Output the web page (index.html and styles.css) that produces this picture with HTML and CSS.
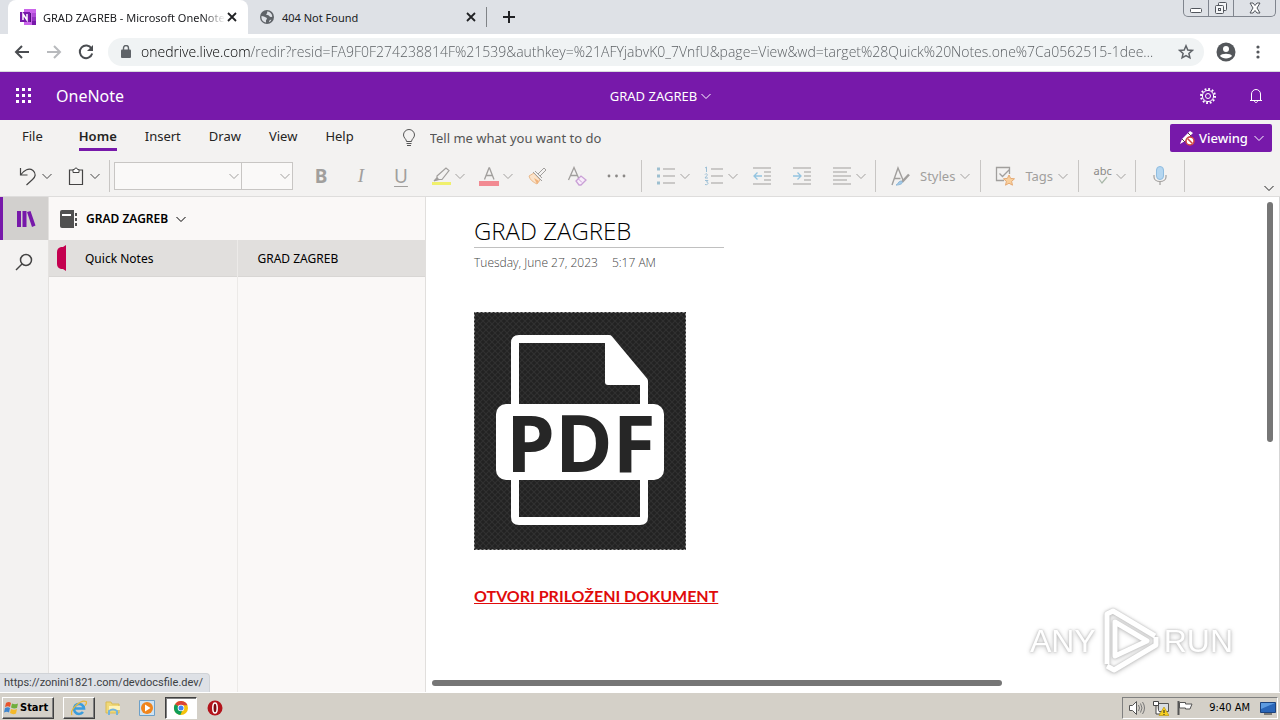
FILE: index.html
```html
<!DOCTYPE html>
<html lang="en">
<head>
<meta charset="utf-8">
<title>GRAD ZAGREB - Microsoft OneNote</title>
<link rel="stylesheet" href="styles.css">
</head>
<body>
<svg class="defs" aria-hidden="true">
  <symbol id="chev" viewBox="0 0 10 10"><path d="M.5 3 5 7.500 9.500 3" fill="none" stroke="currentColor" stroke-width="1"/></symbol>
  <symbol id="cross" viewBox="0 0 10 10"><path d="M1 1 9 9M9 1 1 9" fill="none" stroke="currentColor" stroke-width="1.800"/></symbol>
</svg>

<header class="tabstrip">
  <div class="tab active">
    <svg class="i16" viewBox="0 0 16 16"><path fill="#ca64ea" d="M4 0h12v16H4z"/><path fill="#ae4bd5" d="M12 4h4v4h-4z"/><path fill="#9332bf" d="M12 8h4v4h-4z"/><path fill="#7719aa" d="M12 12h4v4h-4z"/><path fill="#50107a" d="M4 4h7v9H4z"/><path fill="#7719aa" d="M0 3h10v10H0z"/><path d="M3 11V5l4 6V5" fill="none" stroke="#fff" stroke-width="1.500"/></svg>
    <span class="tab-title fade">GRAD ZAGREB - Microsoft OneNote</span>
    <button class="bare" aria-label="Close tab"><svg class="i10"><use href="#cross"/></svg></button>
  </div>
  <div class="tab">
    <svg class="i16" viewBox="0 0 16 16"><circle cx="8" cy="8" r="7" fill="#5f6368"/><path fill="#dee1e6" d="M2.500 7c2 0 3 1 4.500 1.500 1.500.5 1 2 0 2.500v2.500C4 13 2 10.500 2.500 7zM8 2.500c3 0 5 2 5.300 5-1.300.8-2.300.8-3-.5-1-1.300-3-.5-3.300-2 1 0 1.500-.8 1-2.500zM10 13c0-1 .5-2 2.300-2.500C12 12 11 12.800 10 13z"/></svg>
    <span class="tab-title">404 Not Found</span>
    <button class="bare" aria-label="Close tab"><svg class="i10"><use href="#cross"/></svg></button>
  </div>
  <button class="newtab bare" aria-label="New tab"><svg class="i12" viewBox="0 0 12 12"><path d="M6 0v12M0 6h12" stroke="#202124" stroke-width="2"/></svg></button>
  <div class="winbtns">
    <button aria-label="Minimize"><svg width="12" height="16" viewBox="0 0 12 16"><rect x=".5" y="8.500" width="11" height="4" rx="1" fill="#fff" stroke="#52565d"/></svg></button>
    <button aria-label="Restore"><svg width="14" height="16" viewBox="0 0 14 16"><g fill="#f4f5f7" stroke="#52565d"><rect x="4.500" y="2.500" width="8" height="8" rx="1"/><rect x="1.500" y="5.500" width="8" height="8" rx="1"/><rect x="4.500" y="8.500" width="2" height="2"/></g></svg></button>
    <button class="wide" aria-label="Close"><svg width="14" height="16" viewBox="0 0 14 16"><path d="M2 3h3l2 2.500L9 3h3L9 8l3 5H9l-2-2.500L5 13H2l3-5z" fill="#fff" stroke="#52565d"/></svg></button>
  </div>
</header>

<nav class="navbar">
  <button class="bare" aria-label="Back"><svg class="i16" viewBox="0 0 16 16"><path d="M15 8H2M8 2 2 8l6 6" fill="none" stroke="#4a4d51" stroke-width="2"/></svg></button>
  <button class="bare" aria-label="Forward"><svg class="i16" viewBox="0 0 16 16"><path d="M1 8h13M8 2l6 6-6 6" fill="none" stroke="#b8babd" stroke-width="2"/></svg></button>
  <button class="bare" aria-label="Reload"><svg class="i16" viewBox="0 0 16 16"><path d="M13.500 4.500A6.300 6.300 0 1 0 14.200 9.500" fill="none" stroke="#4a4d51" stroke-width="2"/><path d="M15 1v6H9z" fill="#4a4d51"/></svg></button>
  <div class="omnibox">
    <svg width="10" height="13" viewBox="0 0 10 13"><rect y="4.500" width="10" height="8.500" rx="1" fill="#5f6368"/><path d="M2.500 5V3a2.500 2.500 0 0 1 5 0v2" fill="none" stroke="#5f6368" stroke-width="1.400"/></svg>
    <input class="url" aria-label="Address" value="onedrive.live.com/redir?resid=FA9F0F274238814F%21539&amp;authkey=%21AFYjabvK0_7VnfU&amp;page=View&amp;wd=target%28Quick%20Notes.one%7Ca0562515-1dee…">
    <button class="bare" aria-label="Bookmark"><svg class="i16" viewBox="0 0 16 16"><path d="M8 1.800 9.800 6l4.500.4-3.400 3 1 4.400L8 11.500l-3.900 2.300 1-4.400-3.400-3L6.200 6z" fill="none" stroke="#5f6368" stroke-width="1.500"/></svg></button>
  </div>
  <button class="bare profile" aria-label="Profile"><svg class="i20" viewBox="0 0 20 20"><circle cx="10" cy="10" r="9.500" fill="#54575b"/><circle cx="10" cy="7" r="3" fill="#fff"/><path d="M4 14c1-3 11-3 12 0-2.500 3.300-9.500 3.300-12 0z" fill="#fff"/></svg></button>
  <button class="bare" aria-label="Menu"><svg width="4" height="16" viewBox="0 0 4 16"><g fill="#54575b"><circle cx="2" cy="3" r="1.600"/><circle cx="2" cy="8" r="1.600"/><circle cx="2" cy="13" r="1.600"/></g></svg></button>
</nav>

<header class="suite">
  <div class="suite-left">
    <button class="bare" aria-label="App launcher"><svg class="i16" viewBox="0 0 16 16"><path fill="#fff" d="M0 0h3v3H0zM6 0h3v3H6zM12 0h3v3h-3zM0 6h3v3H0zM6 6h3v3H6zM12 6h3v3h-3zM0 12h3v3H0zM6 12h3v3H6zM12 12h3v3h-3z"/></svg></button>
    <span class="brand">OneNote</span>
  </div>
  <button class="bare docname">GRAD ZAGREB <svg class="i10"><use href="#chev"/></svg></button>
  <div class="suite-right">
    <button class="bare" aria-label="Settings"><svg class="i16" viewBox="0 0 16 16"><g fill="none" stroke="#fff"><circle cx="8" cy="8" r="2.500"/><circle cx="8" cy="8" r="5.600"/><circle cx="8" cy="8" r="7" stroke-width="2" stroke-dasharray="1.800 1.865"/></g></svg></button>
    <button class="bare" aria-label="Notifications"><svg class="i16" viewBox="0 0 16 16"><path d="M2 12.500h12M3.500 12.500V6a4.500 4.500 0 0 1 9 0v6.500M6.500 13c0 2 3 2 3 0" fill="none" stroke="#fff"/></svg></button>
  </div>
</header>

<section class="ribbon">
  <div class="menu">
    <button class="bare">File</button>
    <button class="bare current">Home</button>
    <button class="bare">Insert</button>
    <button class="bare">Draw</button>
    <button class="bare">View</button>
    <button class="bare">Help</button>
    <label class="tell"><svg width="14" height="18" viewBox="0 0 14 18"><path d="M4.500 12.500C4.500 10 1.500 9 1.500 6a5.500 5.500 0 0 1 11 0c0 3-3 4-3 6.500zM4.500 14.500h5M5 16.500h4" fill="none" stroke="#555"/></svg>
      <input placeholder="Tell me what you want to do"></label>
    <button class="viewing"><svg class="i16" viewBox="0 0 16 16"><path d="M1 14 3 9 11 1l3 2-8 8z" fill="#fff"/><path d="m3 9 3 3M9 3l3 3" stroke="#5b3a44"/><circle cx="11" cy="11" r="4" fill="#fff" stroke="#d0453f" stroke-width="1.500"/><path d="m8.500 8.500 5 5" stroke="#d0453f" stroke-width="1.500"/></svg>Viewing <svg class="i10"><use href="#chev"/></svg></button>
  </div>
  <div class="tools">
    <div class="group first">
      <button class="bare split" aria-label="Undo"><svg class="i20" viewBox="0 0 20 20"><path d="M2.500 2v7h7M2.500 9C6 4 11 1.500 15 4.500c3.500 3 2.500 6.500-.5 9L8.500 19" fill="none" stroke="#444" stroke-width="1.200"/></svg><svg class="i10"><use href="#chev"/></svg></button>
      <button class="bare split" aria-label="Paste"><svg class="i20" viewBox="0 0 20 20"><path d="M7 4H3.500v14.500h13V4H13" fill="none" stroke="#444" stroke-width="1.200"/><path d="M7 6.500V3.500h1.500a1.500 1.500 0 0 1 3 0H13v3z" fill="#fff" stroke="#444"/></svg><svg class="i10"><use href="#chev"/></svg></button>
    </div>
    <div class="group font">
      <div class="combo family"><select aria-label="Font" disabled></select><svg class="i10"><use href="#chev"/></svg></div>
      <div class="combo size"><select aria-label="Font size" disabled></select><svg class="i10"><use href="#chev"/></svg></div>
      <button class="bare glyph bold">B</button>
      <button class="bare glyph ital">I</button>
      <button class="bare glyph und">U</button>
      <button class="bare split" aria-label="Highlight"><svg class="i20" viewBox="0 0 20 20"><path d="M1 16h19v3H1z" fill="#f0f06c"/><path d="M6 10 15 2l3 2.500-7 9H7L3 15l3-3z" fill="none" stroke="#a19f9d" stroke-width="1.200"/><path d="M3 15l3-4 3 3z" fill="#a19f9d"/></svg><svg class="i10"><use href="#chev"/></svg></button>
      <button class="bare split" aria-label="Font color"><svg class="i20" viewBox="0 0 20 20"><path d="M0 15h20v5H0z" fill="#f28a92"/><path d="M5.500 13.500 10 2h.5L15 13.500M7 9.500h6.500" fill="none" stroke="#a19f9d" stroke-width="1.300"/></svg><svg class="i10"><use href="#chev"/></svg></button>
      <button class="bare" aria-label="Format painter"><svg class="i20" viewBox="0 0 20 20"><path d="m2 10 5-3 6 7-3 4C6 16 3 14 2 10z" fill="#fbe3ca" stroke="#eab98a"/><path d="m6 6 9 9M8 5l7 7M11 8l6-6 2 2-6 6" fill="none" stroke="#a19f9d"/><path d="m7 12 5 3-2 3z" fill="#f0b27a"/></svg></button>
      <button class="bare" aria-label="Clear formatting"><svg class="i20" viewBox="0 0 20 20"><path d="M1.500 14 7 1.500 12 13M3.500 9.500h7" fill="none" stroke="#a19f9d" stroke-width="1.300"/><path d="m9 15 5-5 5 4-5 5h-2z" fill="#f8ecfa" stroke="#c9a0d6" stroke-width="1.300"/><path d="m11 12.500 4 4" stroke="#c9a0d6"/></svg></button>
      <button class="bare" aria-label="More font options"><svg class="i20" viewBox="0 0 20 20"><g fill="#8a8886"><circle cx="2" cy="10" r="1.400"/><circle cx="9.500" cy="10" r="1.400"/><circle cx="17" cy="10" r="1.400"/></g></svg></button>
    </div>
    <div class="group">
      <button class="bare split" aria-label="Bullets"><svg class="i20" viewBox="0 0 20 20"><path d="M1 1.500h3v3H1zM1 8.500h3v3H1zM1 15.500h3v3H1z" fill="#9dbfd0"/><path d="M7 3h12M7 10h12M7 17h12" stroke="#a19f9d"/></svg><svg class="i10"><use href="#chev"/></svg></button>
      <button class="bare split" aria-label="Numbering"><svg class="i20" viewBox="0 0 20 20"><path d="M1 2l1.500-1v5M1 8.500c1-1.500 3-.5 2 1L1 12h3M1 14.500h3L2.500 16c2.500 0 2 3.500-1.500 2.500" fill="none" stroke="#9dc0d6"/><path d="M7 3h12M7 10h12M7 17h12" stroke="#a19f9d"/></svg><svg class="i10"><use href="#chev"/></svg></button>
      <button class="bare" aria-label="Decrease indent"><svg class="i20" viewBox="0 0 20 20"><path d="M1 2h18M12 6h7M12 10h7M12 14h7M1 18h18" stroke="#a19f9d"/><path d="M10 10H2M5.500 6.500 2 10l3.500 3.500" fill="none" stroke="#93c4e0" stroke-width="1.300"/></svg></button>
      <button class="bare" aria-label="Increase indent"><svg class="i20" viewBox="0 0 20 20"><path d="M1 2h18M12 6h7M12 10h7M12 14h7M1 18h18" stroke="#a19f9d"/><path d="M1 10h8M5.500 6.500 9 10l-3.500 3.500" fill="none" stroke="#93c4e0" stroke-width="1.300"/></svg></button>
      <button class="bare split" aria-label="Align"><svg class="i20" viewBox="0 0 20 20"><path d="M1 2h18M1 6h14M1 10h18M1 14h14M1 18h18" stroke="#a19f9d"/></svg><svg class="i10"><use href="#chev"/></svg></button>
    </div>
    <div class="group roomy">
      <button class="bare named"><svg class="i20" viewBox="0 0 20 20"><path d="M2 19 8 2l5 12M4.500 12.500h6" fill="none" stroke="#a19f9d" stroke-width="1.400"/><path d="M19 8.500 12 16" stroke="#a19f9d" stroke-width="2.500"/><path d="M6 19c2 0 2-4 5-4 3 1 1 4-5 4z" fill="#a5cbe8" stroke="#8fb8d8"/></svg><span>Styles</span><svg class="i10"><use href="#chev"/></svg></button>
    </div>
    <div class="group roomy">
      <button class="bare named"><svg class="i20" viewBox="0 0 20 20"><path d="M9 14.500H1.500v-13h13V8M4.500 7.500l3 3 7-7" fill="none" stroke="#a19f9d" stroke-width="1.300"/><path d="m14 9 1.600 3.400 3.900.4-2.900 2.600.9 3.800-3.500-2-3.500 2 .9-3.800-2.900-2.600 3.900-.4z" fill="#f9cf9c" stroke="#e5aa74"/></svg><span>Tags</span><svg class="i10"><use href="#chev"/></svg></button>
    </div>
    <div class="group">
      <button class="bare split"><span class="abc">abc<svg class="i10"><path d="m1 3 3 4 5-6" fill="none" stroke="#a9b8a9" stroke-width="1.200"/></svg></span><svg class="i10"><use href="#chev"/></svg></button>
    </div>
    <div class="group mic">
      <button class="bare" aria-label="Dictate"><svg class="i20" viewBox="0 0 20 20"><rect x="6.500" y=".5" width="7" height="13" rx="3.500" fill="#b4d6f0" stroke="#8fbde0"/><path d="M4 9v2c0 6 12 6 12 0V9M10 15.500V19" fill="none" stroke="#a19f9d" stroke-width="1.200"/></svg></button>
    </div>
    <button class="bare expand" aria-label="Expand ribbon"><svg class="i10"><use href="#chev"/></svg></button>
  </div>
</section>

<main class="work">
  <aside class="rail">
    <button class="bare on" aria-label="Notebooks"><svg class="i20" viewBox="0 0 20 20"><path fill="#7719aa" d="M1 2h4v16H1zM6.500 2h4v16h-4zM11 3l3.500-1 5 14.500L16 18z"/></svg></button>
    <button class="bare" aria-label="Search"><svg class="i20" viewBox="0 0 20 20"><circle cx="12" cy="8" r="5.500" fill="none" stroke="#444" stroke-width="1.500"/><path d="m8 12-6 6" stroke="#444" stroke-width="1.500"/></svg></button>
  </aside>
  <aside class="notebook">
    <button class="bare book"><svg width="18" height="18" viewBox="0 0 18 18"><path d="M2 0h12v18H2a2 2 0 0 1-2-2V2a2 2 0 0 1 2-2z" fill="#505050"/><path d="M2 4h9v2H2z" fill="#fff"/><path d="M16 3v13" stroke="#505050" stroke-width="2" stroke-dasharray="3 2"/></svg><span>GRAD ZAGREB</span><svg class="i10"><use href="#chev"/></svg></button>
    <div class="lists">
      <div class="sections"><button class="bare row"><svg width="9" height="26" viewBox="0 0 9 26"><path d="M9 0v26L6 24H4q-4-1-4-5V7q0-4 4-5h2z" fill="#c4004f"/></svg><span>Quick Notes</span></button></div>
      <div class="pages"><button class="bare row">GRAD ZAGREB</button></div>
    </div>
  </aside>
  <article class="canvas">
    <h1>GRAD ZAGREB</h1>
    <p class="date"><span>Tuesday, June 27, 2023</span><span>5:17 AM</span></p>
    <svg class="pdf" viewBox="0 0 212 238" role="img" aria-label="PDF">
      <defs><pattern id="weave" width="6" height="6" patternUnits="userSpaceOnUse"><path fill="#222" d="M0 0h6v6H0z"/><path d="M0 0 6 6M6 0 0 6" stroke="#303030" stroke-width="1.100"/></pattern></defs>
      <path fill="url(#weave)" d="M0 0h212v238H0z"/>
      <path fill="none" stroke="#999" stroke-dasharray="2 2" d="M.5.500h211v237H.5z"/>
      <path d="M41 100V31q0-4 4-4h90l35 42v136q0 4-4 4H45q-4 0-4-4v-50" fill="none" stroke="#fff" stroke-width="8" stroke-linejoin="round"/>
      <path d="M131 27h7l34 42v4h-38q-3 0-3-3z" fill="#fff"/>
      <rect x="22" y="92" width="168" height="76" rx="10" fill="#fff"/>
      <text x="32" y="160" class="pdf-text">PDF</text>
    </svg>
    <a class="doclink" href="#">OTVORI PRILOŽENI DOKUMENT</a>
    <div class="vbar"></div>
    <div class="hbar"></div>
    <div class="mark"><span>ANY</span><svg width="62" height="66" viewBox="0 0 62 66"><g fill="none" stroke="#fff" stroke-width="5" stroke-linejoin="round"><path d="M8 56V6l6-3 42 25"/><path d="M16 48V14l32 19z"/><path d="M8 58l7 4 42-25v-8"/></g></svg><span>RUN</span></div>
  </article>
  <div class="status">https://zonini1821.com/devdocsfile.dev/</div>
</main>

<footer class="taskbar">
  <button class="start"><svg class="i16" viewBox="0 0 16 16"><path d="M2 3q3-2 5 0L6 7Q4 5.500 1 7z" fill="#e8542c"/><path d="M8 3.500q3 1.500 6 0L13 8q-3 1-6-.5z" fill="#6fae3c"/><path d="M1 8q3-1.500 5 0l-1 4.500q-2-1.500-5 0z" fill="#3f86cf"/><path d="M7 9q3 1.500 6 0l-1 4.500q-3 1.500-6-.5z" fill="#f4b92a"/></svg>Start</button>
  <button class="task raised" aria-label="Internet Explorer"><svg class="i16" viewBox="0 0 16 16"><path d="M3 8.500h10A5 5 0 1 0 12 12" fill="none" stroke="#3b9ddd" stroke-width="2.600"/><path d="M1 15C-2 10 10-1 15 1.500c1 1 0 3-1 4" fill="none" stroke="#e8b73a" stroke-width="1.300"/></svg></button>
  <button class="task" aria-label="Explorer"><svg class="i16" viewBox="0 0 16 16"><path d="M1 2h5l1 2h7v9H1z" fill="#f0d878" stroke="#d9bb55"/><path d="M4 6h11v4H4z" fill="#fff3b8"/><path d="M4 15v-4q4-3 8 0v4" fill="none" stroke="#74b4dc" stroke-width="2"/></svg></button>
  <button class="task" aria-label="Media Player"><svg class="i16" viewBox="0 0 16 16"><path fill="#cfe3f2" stroke="#6da0c8" d="M.5.500h15v15H.5z"/><circle cx="8" cy="8" r="6" fill="#f0851c"/><path d="m6 4.500 5.500 3.500L6 11.500z" fill="#fff"/></svg></button>
  <button class="task pressed" aria-label="Chrome"><svg class="i16" viewBox="0 0 16 16"><circle cx="8" cy="8" r="7" fill="#f4c20d"/><path d="M8 8 2 4.300a7 7 0 0 1 12.500 1H8z" fill="#db4437"/><path d="M8 8 2 4.300A7 7 0 0 0 7.300 15L10 9z" fill="#0f9d58"/><circle cx="8" cy="8" r="3.300" fill="#fff"/><circle cx="8" cy="8" r="2.500" fill="#4285f4"/></svg></button>
  <button class="task" aria-label="Opera"><svg class="i16" viewBox="0 0 16 16"><circle cx="8" cy="8" r="7.500" fill="#b3141c"/><ellipse cx="8" cy="8" rx="2.200" ry="5" fill="#7c0a10" stroke="#fff" stroke-width="1.500"/></svg></button>
  <div class="tray">
    <svg class="i16" viewBox="0 0 16 16"><path d="M.5 5.500h3l4-4v13l-4-4h-3z" fill="#fff" stroke="#555"/><path d="M9.500 5q2 3 0 6M11.500 3.500q3 4.500 0 9M13.500 2q4 6 0 12" fill="none" stroke="#777"/></svg>
    <svg class="i16" viewBox="0 0 16 16"><path d="M5.500 3.500h10v8h-10z" fill="#d8dde2" stroke="#555"/><path d="M.5 1.500h5v4h-5zM3 6v8h4" fill="#fff" stroke="#444"/><path d="m11 7 5 8.500H6z" fill="#f6cf1f" stroke="#b58e00" stroke-width=".6"/><path d="M11 10v3M11 14v1" stroke="#222"/></svg>
    <svg class="i16" viewBox="0 0 16 16"><path d="M1.500 1v14" stroke="#555" stroke-width="2"/><path d="M2.500 2.500h6v1.500h6.500l-2 5H8.500V8h-6z" fill="#fff" stroke="#555"/></svg>
    <time>9:40 AM</time>
    <svg class="i16" viewBox="0 0 16 16"><path fill="#2a66b8" stroke="#1c437e" d="M.5 2.500h15v10H.5z"/><path d="M1 3h14L1 9z" fill="#5d9be0"/><path d="M4 14h8" stroke="#222"/></svg>
  </div>
</footer>
</body>
</html>
```
FILE: styles.css
```css
* { box-sizing: border-box; }
body {
  margin: 0;
  height: 100vh;
  display: flex;
  flex-direction: column;
  overflow: hidden;
  font-family: "Noto Sans", "Open Sans", sans-serif;
  font-size: 12px;
  color: #000;
  background: #fff;
}
button, input, select { font: inherit; color: inherit; }
svg { display: block; flex: none; }
.defs { position: absolute; width: 0; height: 0; }
.bare { border: 0; padding: 0; margin: 0; background: none; display: flex; align-items: center; flex: none; }
.i10 { width: 10px; height: 10px; }
.i12 { width: 12px; height: 12px; }
.i16 { width: 16px; height: 16px; }
.i20 { width: 20px; height: 20px; }

.tabstrip { height: 34px; flex: none; display: flex; background: #dee1e6; padding-left: 8px; }
.tab { width: 239px; display: flex; align-items: center; padding: 0 11px; font-size: 11px; color: #202124; }
.tab.active { background: #fff; border-radius: 8px 8px 0 0; padding-left: 12px; width: 240px; }
.tab + .tab { border-right: 1px solid #808387; height: 20px; margin-top: 7px; padding-right: 10px; }
.tab-title { flex: 1; margin: 0 2px 0 7px; white-space: nowrap; }
.fade { -webkit-mask-image: linear-gradient(90deg, #000 88%, transparent); mask-image: linear-gradient(90deg, #000 88%, transparent); }
.newtab { width: 44px; justify-content: center; }
.winbtns { margin: 0 4px 0 auto; height: 17px; display: flex; border: 1px solid #80858e; border-top: 0; border-radius: 0 0 5px 5px; }
.winbtns button { width: 25px; padding: 0; display: flex; justify-content: center; border: 0; border-right: 1px solid #80858e; background: none; }
.winbtns .wide { width: 41px; border-right: 0; }

.navbar { height: 38px; flex: none; display: flex; align-items: center; gap: 16px; padding: 0 20px 2px 14px; border-bottom: 1px solid #d8dadd; }
.omnibox { flex: 1; min-width: 0; height: 28px; margin-left: -2px; display: flex; align-items: center; gap: 10px; padding: 0 10px 0 13px; background: #f0f3f4; border-radius: 14px; }
.profile { margin: 0 4px 0 -4px; }
.url {
  flex: 1; min-width: 0; border: 0; padding: 0; outline: 0;
  font: 300 14px "Open Sans", "Noto Sans", sans-serif;
  color: transparent;
  background: linear-gradient(90deg, #000 110px, #55595d 110px);
  -webkit-background-clip: text; background-clip: text;
}

.suite { height: 48px; flex: none; display: grid; grid-template-columns: 1fr auto 1fr; align-items: center; padding: 0 16px; background: #7719aa; color: #fff; }
.suite-left { display: flex; align-items: center; gap: 24px; }
.brand { font-size: 16px; }
.docname { font-size: 13px; gap: 4px; padding-left: 41px; }
.suite-right { display: flex; justify-content: flex-end; gap: 32px; }

.ribbon { flex: none; background: #f3f2f1; border-bottom: 1px solid #dedddc; }
.menu { height: 36px; display: flex; align-items: center; padding: 0 8px 0 22px; font-size: 13px; color: #252423; }
.menu > .bare { margin-right: 28px; height: 31px; padding-top: 4px; align-self: flex-start; border-bottom: 3px solid transparent; }
.menu > .bare:first-child { margin-right: 36px; }
.menu .current { font-weight: 600; border-color: #7719aa; }
.tell { flex: 1; display: flex; align-items: center; gap: 14px; margin-left: 20px; }
.tell input { flex: 1; border: 0; padding: 0; background: none; font-size: 13px; outline: 0; }
.tell input::placeholder { color: #555; opacity: 1; }
.viewing { height: 28px; width: 102px; padding: 0 8px 0 9px; display: flex; align-items: center; gap: 4px; border: 0; border-radius: 2px; background: #7719aa; color: #fff; font-weight: 500; }
.viewing .i10 { margin-left: auto; }
.tools { height: 40px; display: flex; align-items: center; color: #a19f9d; }
.group { height: 32px; display: flex; align-items: center; padding: 0 9px 0 14px; border-right: 1px solid #c8c6c4; }
.group > .bare { width: 20px; margin-right: 20px; }
.group > .split { width: auto; gap: 4px; margin-right: 14px; }
.group > .named { width: auto; gap: 10px; font-size: 13px; }
.named .i10 { margin-left: -5px; }
.group > .bare:last-child { margin-right: 0; }
.group.first { padding-left: 18px; color: #444; }
.group.font { padding: 0 14px 0 4px; }
.group.roomy { padding-right: 10px; }
.group.mic { padding: 0 14px; }
.combo { position: relative; height: 28px; }
.combo select { appearance: none; width: 100%; height: 28px; border: 1px solid #c8c6c4; border-radius: 0; background: #faf9f8; opacity: 1; }
.combo svg { position: absolute; right: 3px; top: 9px; }
.combo.family { width: 128px; }
.combo.size { width: 51px; margin: 0 18px 0 0; }
.combo.size select { border-left: 0; }
.glyph { justify-content: center; font-size: 19px; }
.bold { font-weight: 700; }
.ital { font-family: "Liberation Serif", serif; font-style: italic; }
.und { text-decoration: underline; text-underline-offset: 3px; }
.abc { width: 19px; font-size: 11px; line-height: 10px; display: flex; flex-direction: column; align-items: center; color: #8a8886; }
.expand { margin: 24px 6px 0 auto; color: #222; }

.work { flex: 1; min-height: 0; display: flex; position: relative; border-right: 1px solid #d5d5d5; }
.rail { width: 49px; background: #f3f2f1; border-right: 1px solid #e4e2e0; }
.rail .bare { width: 48px; height: 43px; justify-content: center; }
.rail .on { background: #d2d0ce; border-left: 3px solid #7719aa; }
.notebook { width: 377px; background: #faf8f7; border-right: 1px solid #e1dfdd; display: flex; flex-direction: column; }
.book { height: 43px; padding-left: 11px; gap: 8px; font-weight: 600; }
.lists { flex: 1; display: flex; }
.sections { flex: 1; border-right: 1px solid #eceae8; }
.pages { flex: 1; }
.row { width: 100%; height: 37px; background: #e1dfdd; border-bottom: 1px solid #d8d6d4; }
.sections .row { padding-left: 8px; gap: 19px; }
.pages .row { padding-left: 20px; }
.canvas { flex: 1; min-width: 0; padding: 17px 48px 0; background: #fff; position: relative; }
h1 { margin: 0; width: 250px; height: 34px; border-bottom: 1px solid #c0c0c0; font: 300 24px/34px "Open Sans", "Noto Sans", sans-serif; white-space: nowrap; }
.date { margin: 7px 0 41px; display: flex; gap: 14px; font: 300 12px/16px "Open Sans", "Noto Sans", sans-serif; color: #444; }
.pdf { width: 212px; height: 238px; }
.pdf-text { font: 700 78px "Open Sans", "Noto Sans", sans-serif; fill: #262626; }
.doclink { display: inline-block; margin-top: 34px; font: 700 16px/24px "Lato", sans-serif; color: #e00b0b; }
.vbar { position: absolute; right: 6px; top: 5px; width: 6px; height: 240px; border-radius: 3px; background: #767676; }
.hbar { position: absolute; left: 6px; bottom: 6px; width: 570px; height: 6px; border-radius: 3px; background: #767676; }
.mark { position: absolute; right: 46px; bottom: 18px; display: flex; align-items: center; gap: 3px; font: 32px "Liberation Sans", sans-serif; color: #fff; filter: drop-shadow(0 0 1px #bbb) drop-shadow(0 1px 2px #ccc); }
.status { position: absolute; left: 0; bottom: 0; height: 19px; padding: 0 6px 0 4px; font-family: Roboto, sans-serif; font-size: 11px; line-height: 18px; color: #3c4043; background: #dee1e6; border: 1px solid #d0d3d7; border-width: 1px 1px 0 0; border-radius: 0 4px 0 0; }

.taskbar { height: 28px; flex: none; display: flex; align-items: center; gap: 2px; padding: 2px 2px 0; background: #d4d0c8; border-top: 1px solid #fff; box-shadow: 0 -1px #d4d0c8; font-family: "DejaVu Sans Condensed", "DejaVu Sans", sans-serif; font-size: 11px; }
.start { width: 52px; height: 22px; padding: 0 1px; display: flex; align-items: center; border: 1px solid; border-color: #fff #404040 #404040 #fff; box-shadow: inset -1px -1px #808080; background: #d4d0c8; font-weight: 700; }
.task { width: 32px; height: 22px; padding: 0; display: flex; align-items: center; justify-content: center; border: 1px solid transparent; background: none; }
.raised { margin-left: 7px; border-color: #fff #404040 #404040 #fff; box-shadow: inset -1px -1px #808080; }
.pressed { background: #fff; border-color: #404040 #fff #fff #404040; box-shadow: inset 1px 1px #808080; }
.tray { margin-left: auto; height: 22px; display: flex; align-items: center; gap: 8px; padding: 0 1px 0 6px; border: 1px solid; border-color: #808080 #fff #fff #808080; }
.tray time { margin: 0 2px 0 8px; }
```
